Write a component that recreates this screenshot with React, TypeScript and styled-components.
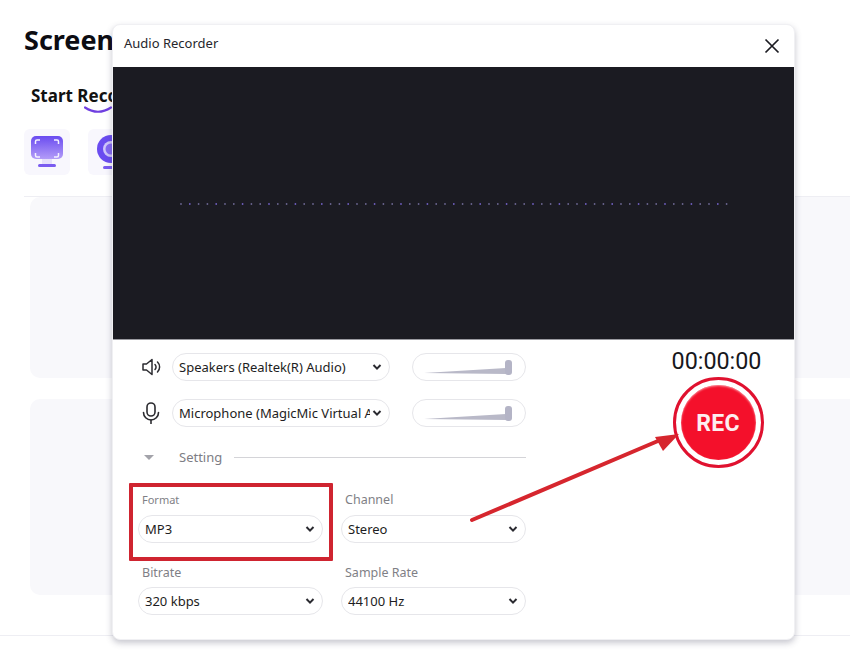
import React from "react";
import styled, { createGlobalStyle } from "styled-components";

const Global = createGlobalStyle`
  html, body { margin: 0; padding: 0; background: #fff; }
  body { font-family: "Noto Sans", "Open Sans", sans-serif; color: #16161c; }
`;

const Page = styled.div`
  position: relative;
  width: 850px;
  height: 655px;
  overflow: hidden;
  background: #fff;
`;
const Backdrop = styled.div`
  display: flex;
  flex-direction: column;
  padding-top: 20px;
`;
const Title = styled.h1`
  margin: 0 0 0 24px;
  font-size: 27px;
  line-height: 40px;
  font-weight: 700;
  color: #0c0c12;
`;
const TabWrap = styled.div`
  margin: 24px 0 0 31px;
  height: 32px;
  position: relative;
`;
const TabLabel = styled.div`
  font-size: 17px;
  line-height: 24px;
  font-weight: 700;
  color: #111;
`;
const TabSmile = styled.svg`
  position: absolute;
  left: 53px;
  top: 22px;
`;
const Tiles = styled.div`
  display: flex;
  gap: 18px;
  margin: 13px 0 0 24px;
`;
const Tile = styled.div`
  width: 46px;
  height: 46px;
  border-radius: 6px;
  background: #f8f7fd;
  display: flex;
  align-items: center;
  justify-content: center;
`;
const Section = styled.div`
  margin: 21px 0 0 24px;
  border-top: 1px solid #eeeef3;
  padding-left: 6px;
`;
const Card = styled.div<{ $h: number; $mt: number }>`
  height: ${(p) => p.$h}px;
  margin-top: ${(p) => p.$mt}px;
  background: #f8f8fb;
  border-radius: 10px 0 0 10px;
`;
const Footer = styled.div`
  margin-top: 40px;
  border-top: 1px solid #eeeef3;
`;

const Modal = styled.div`
  position: absolute;
  left: 112px;
  top: 24px;
  width: 683px;
  height: 616px;
  box-sizing: border-box;
  border: 1px solid #f0f0f3;
  background: #fff;
  border-radius: 8px;
  box-shadow: 0 3px 6px rgba(70, 70, 95, 0.3);
  display: flex;
  flex-direction: column;
  overflow: hidden;
`;
const Header = styled.div`
  height: 42px;
  flex: none;
  display: flex;
  align-items: center;
  justify-content: space-between;
  padding: 0 13px 6px 11px;
  box-sizing: border-box;
`;
const HeaderTitle = styled.div`
  font-size: 13px;
  color: #26262c;
`;
const CloseBtn = styled.svg`
  display: block;
  margin-top: 5px;
`;
const Screen = styled.div`
  height: 273px;
  flex: none;
  background: #1b1b22;
  border-bottom: 1px solid #9a9aa0;
  box-sizing: border-box;
  display: flex;
  align-items: center;
  justify-content: center;
`;
const Wave = styled.svg`
  display: block;
  margin: 1px 0 0 4px;
`;
const Controls = styled.div`
  display: flex;
  justify-content: space-between;
  padding: 13px 30px 0 25px;
`;
const LeftCol = styled.div`
  width: 388px;
  display: flex;
  flex-direction: column;
`;
const DeviceRow = styled.div`
  display: flex;
  align-items: center;
  height: 28px;
  margin-bottom: 18px;
`;
const DeviceIcon = styled.div`
  width: 34px;
  flex: none;
  display: flex;
  padding-left: 3px;
  box-sizing: border-box;
`;
const Select = styled.div<{ $w?: number }>`
  width: ${(p) => (p.$w ? `${p.$w}px` : "100%")};
  height: 28px;
  flex: none;
  box-sizing: border-box;
  border: 1px solid #e6e6ea;
  border-radius: 14px;
  padding: 0 7px 0 6px;
  display: flex;
  align-items: center;
  justify-content: space-between;
  font-size: 13px;
  color: #1d1d22;
  background: #fff;
`;
const SelectText = styled.span`
  white-space: nowrap;
  overflow: hidden;
  flex: 1;
  min-width: 0;
`;
const Chevron = styled.svg`
  flex: none;
  margin-left: 2px;
`;
const Volume = styled.div`
  width: 114px;
  height: 28px;
  flex: none;
  margin-left: 22px;
  box-sizing: border-box;
  border: 1px solid #e6e6ea;
  border-radius: 14px;
  display: flex;
  align-items: center;
  justify-content: center;
`;
const SettingRow = styled.div`
  display: flex;
  align-items: center;
  height: 22px;
  margin-top: 1px;
`;
const Caret = styled.div`
  width: 0;
  height: 0;
  border-left: 5px solid transparent;
  border-right: 5px solid transparent;
  border-top: 5px solid #a3a3aa;
  margin-left: 6px;
`;
const SettingLabel = styled.div`
  margin-left: 25px;
  font-size: 13px;
  color: #7d7d84;
`;
const Rule = styled.div`
  flex: 1;
  height: 1px;
  background: #d4d4d8;
  margin-left: 12px;
`;
const FieldGrid = styled.div`
  display: grid;
  grid-template-columns: 185px 185px;
  column-gap: 18px;
  row-gap: 9px;
  margin: 22px 0 0 0;
  width: 388px;
`;
const Field = styled.div`
  display: flex;
  flex-direction: column;
  height: 63px;
`;
const FieldLabel = styled.div<{ $small?: boolean; $low?: boolean }>`
  font-size: ${(p) => (p.$small ? "11px" : "12.5px")};
  line-height: 18px;
  height: 18px;
  color: #7f7f86;
  padding-left: 4px;
  margin-top: ${(p) => (p.$low ? "2px" : "1px")};
  margin-bottom: ${(p) => (p.$low ? "5px" : "6px")};
`;
const RightCol = styled.div`
  width: 92px;
  display: flex;
  flex-direction: column;
  align-items: center;
`;
const Timer = styled.div`
  font-family: "Roboto", sans-serif;
  font-size: 23.3px;
  line-height: 30px;
  margin-top: -7px;
  margin-left: -3px;
  white-space: nowrap;
  color: #17171c;
`;
const RecRing = styled.div`
  width: 91px;
  height: 91px;
  margin-top: 1px;
  box-sizing: border-box;
  border: 3px solid #e0112f;
  border-radius: 50%;
  padding: 5px;
  background: #fff;
`;
const RecButton = styled.div`
  width: 100%;
  height: 100%;
  padding-top: 2px;
  box-sizing: border-box;
  border-radius: 50%;
  background: #f4102b;
  box-shadow: inset 0 1px 2px rgba(255, 200, 205, 0.7);
  color: #fdeef0;
  display: flex;
  align-items: center;
  justify-content: center;
  font-family: "Roboto", sans-serif;
  font-weight: 700;
  font-size: 23px;
  letter-spacing: 0.3px;
`;
const HighlightBox = styled.div`
  position: absolute;
  left: 129px;
  top: 483px;
  width: 204px;
  height: 78px;
  box-sizing: border-box;
  border: 4px solid #cf2430;
  border-radius: 1px;
`;
const ArrowOverlay = styled.svg`
  position: absolute;
  left: 460px;
  top: 425px;
`;

const ChevronIcon = () => (
  <Chevron width="10" height="8" viewBox="0 0 10 8" fill="none">
    <path d="M1.5 2 L5 5.6 L8.5 2" stroke="#2a2a30" strokeWidth="2" />
  </Chevron>
);

const Dropdown = ({ text, w }: { text: string; w?: number }) => (
  <Select $w={w}>
    <SelectText>{text}</SelectText>
    <ChevronIcon />
  </Select>
);

const Slider = () => (
  <svg width="90" height="18" viewBox="0 0 90 18">
    <path d="M0 15 L82 10 L82 16 Z" fill="#b9b9c8" />
    <rect x="81" y="2" width="7" height="15" rx="3" fill="#b4b4c6" />
  </svg>
);

const Field2 = ({ label, value, small, low }: { label: string; value: string; small?: boolean; low?: boolean }) => (
  <Field>
    <FieldLabel $small={small} $low={low}>{label}</FieldLabel>
    <Dropdown text={value} />
  </Field>
);

export default function App() {
  const dots = Array.from({ length: 63 }, (_, i) => i * 8.8 + 1);
  return (
    <Page>
      <Global />
      <Backdrop>
        <Title>Screen Recorder</Title>
        <TabWrap>
          <TabLabel>Start Recording</TabLabel>
          <TabSmile width="28" height="8" viewBox="0 0 28 8" fill="none">
            <path d="M1 1.5 Q14 10 27 1.5" stroke="#6f3fe0" strokeWidth="2.2" strokeLinecap="round" />
          </TabSmile>
        </TabWrap>
        <Tiles>
          <Tile>
            <svg width="34" height="34" viewBox="0 0 34 34" fill="none">
              <defs>
                <linearGradient id="scr" x1="0" y1="0" x2="0" y2="1">
                  <stop offset="0" stopColor="#6a4cf0" />
                  <stop offset="1" stopColor="#b39cf8" />
                </linearGradient>
              </defs>
              <rect x="1" y="1" width="32" height="23" rx="5" fill="url(#scr)" />
              <path d="M5.5 9V6.5A1.500 1.500 0 0 1 7 5h3M24 5h3a1.500 1.500 0 0 1 1.500 1.500V9M28.500 18v2.500A1.500 1.500 0 0 1 27 22h-3M10 22H7a1.500 1.500 0 0 1-1.500-1.500V18" stroke="#f4f1ff" strokeWidth="1.5" />
              <rect x="12" y="24" width="10" height="5" fill="#e6e0fb" />
              <rect x="8" y="29" width="18" height="3" rx="1.5" fill="#7a5cf0" />
            </svg>
          </Tile>
          <Tile>
            <svg width="34" height="34" viewBox="0 0 34 34" fill="none">
              <circle cx="17" cy="14" r="14" fill="#6a4cf0" />
              <circle cx="17" cy="14" r="8" fill="#cfc6fa" />
              <circle cx="17" cy="14" r="5.5" fill="#8468f2" />
              <rect x="9" y="31" width="16" height="3" rx="1.5" fill="#7a5cf0" />
            </svg>
          </Tile>
        </Tiles>
        <Section>
          <Card $h={181} $mt={0} />
          <Card $h={196} $mt={21} />
        </Section>
        <Footer />
      </Backdrop>

      <Modal>
        <Header>
          <HeaderTitle>Audio Recorder</HeaderTitle>
          <CloseBtn width="18" height="18" viewBox="0 0 18 18" fill="none">
            <path d="M2.5 2.5 L15.5 15.5 M15.5 2.5 L2.5 15.5" stroke="#1c1c22" strokeWidth="1.7" />
          </CloseBtn>
        </Header>
        <Screen>
          <Wave width="552" height="4" viewBox="0 0 552 4">
            {dots.map((x, i) => (
              <circle key={i} cx={x} cy="2" r="0.9" fill={i % 3 === 1 ? "#6f5fc0" : "#6b6690"} />
            ))}
          </Wave>
        </Screen>
        <Controls>
          <LeftCol>
            <DeviceRow>
              <DeviceIcon>
                <svg width="22" height="20" viewBox="0 0 22 20" fill="none" stroke="#2b2b30" strokeWidth="1.5" strokeLinejoin="round" strokeLinecap="round">
                  <path d="M2 7v6h3.500L11 17.500v-15L5.500 7z" />
                  <path d="M14 7.500a3.500 3.500 0 0 1 0 5" />
                  <path d="M16.500 5a7 7 0 0 1 0 10" />
                </svg>
              </DeviceIcon>
              <Dropdown text="Speakers (Realtek(R) Audio)" w={218} />
              <Volume><Slider /></Volume>
            </DeviceRow>
            <DeviceRow>
              <DeviceIcon>
                <svg width="20" height="22" viewBox="0 0 20 22" fill="none" stroke="#2b2b30" strokeWidth="1.6" strokeLinecap="round">
                  <rect x="6" y="1" width="8" height="13" rx="4" />
                  <path d="M2.500 10.500a7.500 7.500 0 0 0 15 0" />
                  <path d="M10 18v3.500" />
                </svg>
              </DeviceIcon>
              <Dropdown text="Microphone (MagicMic Virtual Audio Device)" w={218} />
              <Volume><Slider /></Volume>
            </DeviceRow>
            <SettingRow>
              <Caret />
              <SettingLabel>Setting</SettingLabel>
              <Rule />
            </SettingRow>
            <FieldGrid>
              <Field2 label="Format" value="MP3" small />
              <Field2 label="Channel" value="Stereo" />
              <Field2 label="Bitrate" value="320 kbps" low />
              <Field2 label="Sample Rate" value="44100 Hz" low />
            </FieldGrid>
          </LeftCol>
          <RightCol>
            <Timer>00:00:00</Timer>
            <RecRing>
              <RecButton>REC</RecButton>
            </RecRing>
          </RightCol>
        </Controls>
      </Modal>

      <HighlightBox />
      <ArrowOverlay width="230" height="110" viewBox="0 0 230 110" fill="none">
        <path d="M12 95 L205 13" stroke="#d6262e" strokeWidth="4" strokeLinecap="round" />
        <path d="M219 9 L195 12 L203 26 Z" fill="#d6262e" />
      </ArrowOverlay>
    </Page>
  );
}
